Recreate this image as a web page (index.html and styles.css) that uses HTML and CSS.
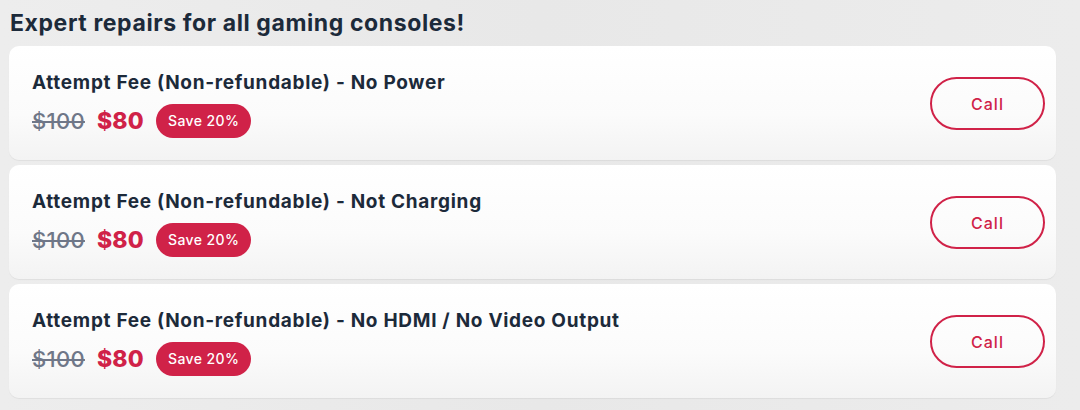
FILE: index.html
```html
<!DOCTYPE html>
<html lang="en">
<head>
<meta charset="utf-8">
<title>Repairs</title>
<link rel="stylesheet" href="styles.css">
</head>
<body>
<main class="page">
  <h1 class="heading">Expert repairs for all gaming consoles!</h1>
  <ul class="list">
    <li class="card">
      <div class="info">
        <h2 class="title">Attempt Fee (Non-refundable) - No Power</h2>
        <div class="prices">
          <span class="old">$100</span>
          <span class="new">$80</span>
          <span class="badge">Save 20%</span>
        </div>
      </div>
      <button class="call">Call</button>
    </li>
    <li class="card">
      <div class="info">
        <h2 class="title">Attempt Fee (Non-refundable) - Not Charging</h2>
        <div class="prices">
          <span class="old">$100</span>
          <span class="new">$80</span>
          <span class="badge">Save 20%</span>
        </div>
      </div>
      <button class="call">Call</button>
    </li>
    <li class="card">
      <div class="info">
        <h2 class="title">Attempt Fee (Non-refundable) - No HDMI / No Video Output</h2>
        <div class="prices">
          <span class="old">$100</span>
          <span class="new">$80</span>
          <span class="badge">Save 20%</span>
        </div>
      </div>
      <button class="call">Call</button>
    </li>
  </ul>
</main>
</body>
</html>
```
FILE: styles.css
```css
html, body {
  margin: 0;
  padding: 0;
}
body {
  background: linear-gradient(90deg, #ededed 0%, #e8e8e8 50%, #ececec 100%);
  font-family: "Inter", "Noto Sans", sans-serif;
  color: #1c2a3a;
  width: 1080px;
  height: 410px;
  overflow: hidden;
}
.page {
  padding: 9px 24px 0 9px;
}
.heading {
  margin: 0 0 9px 1px;
  font-size: 23px;
  line-height: 28px;
  font-weight: 700;
  letter-spacing: 0.6px;
  color: #1c2a3a;
}
.list {
  list-style: none;
  margin: 0;
  padding: 0;
  display: flex;
  flex-direction: column;
  gap: 5px;
}
.card {
  height: 114px;
  box-sizing: border-box;
  display: flex;
  align-items: center;
  justify-content: space-between;
  padding: 0 11px 0 23px;
  border-radius: 10px;
  background: linear-gradient(180deg, #ffffff 0%, #fbfbfb 60%, #f3f3f3 100%);
  box-shadow: 0 1px 1px rgba(0, 0, 0, 0.06);
}
.info {
  display: flex;
  flex-direction: column;
  gap: 9px;
  padding-top: 2px;
}
.title {
  margin: 0;
  font-size: 19px;
  line-height: 24px;
  font-weight: 700;
  letter-spacing: 0.7px;
  color: #1c2a3a;
}
.prices {
  display: flex;
  align-items: center;
  gap: 12px;
}
.old {
  font-size: 22px;
  color: #6f7788;
  letter-spacing: 0.3px;
  text-decoration: line-through;
  text-decoration-thickness: 2px;
  font-weight: 500;
}
.new {
  font-size: 23px;
  font-weight: 800;
  letter-spacing: 0.2px;
  color: #d02248;
}
.badge {
  background: #d02248;
  color: #ffffff;
  font-size: 14px;
  font-weight: 500;
  letter-spacing: 0.4px;
  height: 34px;
  line-height: 34px;
  padding: 0 12px;
  border-radius: 17px;
}
.call {
  width: 115px;
  height: 53px;
  margin-top: 1px;
  border: 2px solid #d02248;
  border-radius: 27px;
  background: transparent;
  color: #d02248;
  font-family: inherit;
  font-size: 16px;
  font-weight: 500;
  letter-spacing: 1px;
  cursor: pointer;
}
```
